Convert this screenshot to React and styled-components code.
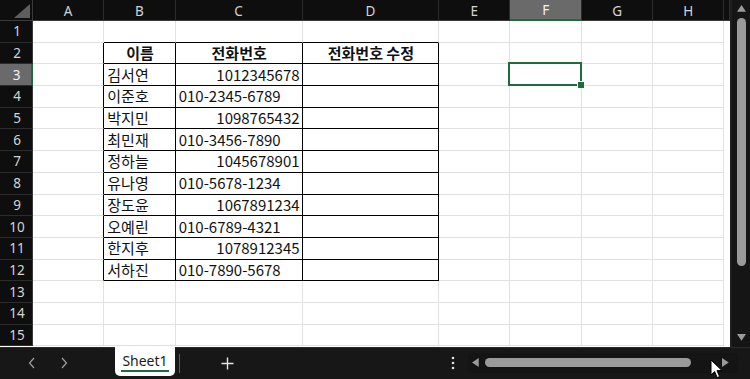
import React from "react";
import styled, { createGlobalStyle, css } from "styled-components";

const Global = createGlobalStyle`
  html, body { margin: 0; padding: 0; background: #171717; overflow: hidden; }
  * { box-sizing: border-box; }
`;

const GREEN = "#1f6b3d";
const GRID = "#e1e1e1";
const HEAD_BG = "#0e0e0e";
const HEAD_LINE = "#2c2c2c";

const colWidths = [71.3, 71.4, 126.9, 136.6, 71.3, 71.7, 71, 71];
const letters = ["A", "B", "C", "D", "E", "F", "G", "H"];

const people = [
  ["김서연", "1012345678", true],
  ["이준호", "010-2345-6789", false],
  ["박지민", "1098765432", true],
  ["최민재", "010-3456-7890", false],
  ["정하늘", "1045678901", true],
  ["유나영", "010-5678-1234", false],
  ["장도윤", "1067891234", true],
  ["오예린", "010-6789-4321", false],
  ["한지후", "1078912345", true],
  ["서하진", "010-7890-5678", false],
];

const Page = styled.div`
  width: 750px;
  height: 379px;
  display: flex;
  flex-direction: column;
  background: #171717;
  position: relative;
  overflow: hidden;
`;

const Main = styled.div`
  display: flex;
  height: 346.5px;
`;

const Sheet = styled.div`
  flex: 1;
  display: grid;
  grid-template-columns: 33px ${colWidths.map((w) => `${w}px`).join(" ")} 1fr;
  grid-template-rows: 21px repeat(15, 21.7px);
  background: #fff;
`;

const Corner = styled.div`
  background: ${HEAD_BG};
  position: relative;
  border-right: 1px solid #3a3a3a;
  border-bottom: 1px solid #3a3a3a;
  svg { position: absolute; right: 2px; bottom: 2px; }
`;

const ColHead = styled.div`
  background: ${(p) => (p.$active ? "#6a6a6a" : HEAD_BG)};
  color: ${(p) => (p.$active ? "#f2f2f2" : "#d4d4d4")};
  border-right: 1px solid ${HEAD_LINE};
  border-bottom: ${(p) => (p.$active ? `2px solid ${GREEN}` : "1px solid #3a3a3a")};
  font: 13.5px "Noto Sans", "Open Sans", sans-serif;
  display: flex;
  align-items: center;
  justify-content: center;
  padding-top: 1px;
`;

const RowHead = styled.div`
  background: ${(p) => (p.$active ? "#6a6a6a" : HEAD_BG)};
  color: ${(p) => (p.$active ? "#f2f2f2" : "#d4d4d4")};
  border-bottom: 1px solid ${HEAD_LINE};
  border-right: ${(p) => (p.$active ? `2px solid ${GREEN}` : "1px solid #3a3a3a")};
  font: 13.5px "Noto Sans", "Open Sans", sans-serif;
  display: flex;
  align-items: center;
  justify-content: center;
  padding-left: 2px;
`;

const Cell = styled.div`
  background: #fff;
  border-right: 1px solid ${(p) => p.$rb};
  border-bottom: 1px solid ${(p) => p.$bb};
  font: ${(p) => (p.$bold ? 700 : 400)} 15px "Noto Sans CJK KR", "Noto Sans", sans-serif;
  color: #111;
  display: flex;
  align-items: center;
  justify-content: ${(p) => p.$align};
  padding: 0 2px 0 3px;
  white-space: nowrap;
  overflow: visible;
  line-height: 20px;
  position: relative;
  ${(p) =>
    p.$selected &&
    css`
      &::after {
        content: "";
        position: absolute;
        inset: -2px -1px -1px -2px;
        border: 2px solid ${GREEN};
      }
      &::before {
        content: "";
        position: absolute;
        right: -4px;
        bottom: -4px;
        width: 6px;
        height: 6px;
        background: ${GREEN};
        border: 1px solid #fff;
        z-index: 2;
      }
    `}
`;

const VScroll = styled.div`
  width: 24px;
  background: #151515;
  border-left: 2px solid #1f1f1f;
  display: flex;
  flex-direction: column;
  align-items: center;
  padding-top: 5px;
`;

const VThumb = styled.div`
  width: 9px;
  height: 248px;
  margin-top: 6px;
  border-radius: 5px;
  background: #9a9a9a;
`;

const Spacer = styled.div`
  flex: 1;
`;

const DownArrow = styled.div`
  margin-bottom: 2px;
`;

const BottomBar = styled.div`
  flex: 1;
  display: flex;
  align-items: stretch;
  background: #171717;
  border-top: 1px solid #2a2a2a;
  padding-right: 12px;
`;

const NavArrows = styled.div`
  width: 115px;
  display: flex;
  align-items: center;
  padding-left: 26px;
  gap: 20px;
  color: #a0a0a0;
`;

const NavBtn = styled.span`
  width: 12px;
  display: flex;
  justify-content: center;
`;

const Tab = styled.div`
  width: 60px;
  margin-top: -1px;
  margin-bottom: 3px;
  background: #fff;
  border-radius: 0 0 5px 5px;
  display: flex;
  flex-direction: column;
  align-items: center;
  justify-content: center;
  font: 14px "Noto Sans", "Open Sans", sans-serif;
  color: #1c1c1c;
`;

const TabLabel = styled.span`
  border-bottom: 2px solid ${GREEN};
  padding: 0 1px 0;
  line-height: 18px;
  margin-top: 1px;
`;

const TabSep = styled.div`
  width: 1px;
  background: #5c5c5c;
  margin: 6px 0 6px 4px;
`;

const AddBtn = styled.div`
  width: 95px;
  display: flex;
  align-items: center;
  justify-content: center;
  color: #e6e6e6;
`;

const MoreBtn = styled.div`
  width: 22px;
  display: flex;
  align-items: center;
  justify-content: center;
  margin-right: 4px;
`;

const HScroll = styled.div`
  width: 270px;
  margin: 5px 0 6px;
  display: flex;
  align-items: center;
  gap: 6px;
  background: #141414;
  border-radius: 4px;
  padding-left: 4px;
`;

const HThumb = styled.div`
  width: 206px;
  height: 9px;
  border-radius: 5px;
  background: #9a9a9a;
`;

const RightArrow = styled.div`
  margin-left: 25px;
  display: flex;
`;

const Cursor = styled.svg`
  position: absolute;
  left: 710px;
  top: 359px;
`;

const Tri = ({ dir, size = 9, color = "#9a9a9a" }) => {
  const s = size;
  const pts = {
    up: `0,${s * 0.75} ${s / 2},0 ${s},${s * 0.75}`,
    down: `0,0 ${s / 2},${s * 0.75} ${s},0`,
    left: `${s * 0.75},0 0,${s / 2} ${s * 0.75},${s}`,
    right: `0,0 ${s * 0.75},${s / 2} 0,${s}`,
  }[dir];
  const horiz = dir === "left" || dir === "right";
  return (
    <svg width={horiz ? s * 0.75 : s} height={horiz ? s : s * 0.75}>
      <polygon points={pts} fill={color} />
    </svg>
  );
};

const inTable = (r, c) => r >= 2 && r <= 12 && c >= 1 && c <= 3;

function cellContent(r, c) {
  if (r === 2) {
    return [null, "이름", "전화번호", "전화번호 수정"][c] ?? "";
  }
  if (r >= 3 && r <= 12) {
    const p = people[r - 3];
    if (c === 1) return p[0];
    if (c === 2) return p[1];
  }
  return "";
}

function alignOf(r, c) {
  if (r === 2) return "center";
  if (r >= 3 && r <= 12 && c === 2 && people[r - 3][2]) return "flex-end";
  return "flex-start";
}

export default function App() {
  const cells = [];
  cells.push(
    <Corner key="corner">
      <svg width="16" height="14">
        <polygon points="16,0 16,14 0,14" fill="#5e5e5e" />
      </svg>
    </Corner>
  );
  letters.forEach((l) =>
    cells.push(
      <ColHead key={"h" + l} $active={l === "F"}>
        {l}
      </ColHead>
    )
  );
  cells.push(<ColHead key="hx" />);

  for (let r = 1; r <= 15; r++) {
    cells.push(
      <RowHead key={"r" + r} $active={r === 3}>
        {r}
      </RowHead>
    );
    for (let c = 0; c < 9; c++) {
      const rb = inTable(r, c) || inTable(r, c + 1) ? "#000" : GRID;
      const bb = inTable(r, c) || inTable(r + 1, c) ? "#000" : GRID;
      cells.push(
        <Cell
          key={r + "-" + c}
          $rb={c === 8 ? "#fff" : rb}
          $bb={c === 8 ? "#fff" : bb}
          $align={alignOf(r, c)}
          $bold={r === 2}
          $selected={r === 3 && c === 5}
        >
          {cellContent(r, c)}
        </Cell>
      );
    }
  }

  return (
    <Page>
      <Global />
      <Main>
        <Sheet>{cells}</Sheet>
        <VScroll>
          <Tri dir="up" />
          <VThumb />
          <Spacer />
          <DownArrow>
            <Tri dir="down" />
          </DownArrow>
        </VScroll>
      </Main>
      <BottomBar>
        <NavArrows>
          <NavBtn>
            <svg width="8" height="12">
              <polyline points="6,1 1.5,6 6,11" fill="none" stroke="#a0a0a0" strokeWidth="1.2" />
            </svg>
          </NavBtn>
          <NavBtn>
            <svg width="8" height="12">
              <polyline points="2,1 6.5,6 2,11" fill="none" stroke="#a0a0a0" strokeWidth="1.2" />
            </svg>
          </NavBtn>
        </NavArrows>
        <Tab>
          <TabLabel>Sheet1</TabLabel>
        </Tab>
        <TabSep />
        <AddBtn>
          <svg width="13" height="13">
            <path d="M6.5 0.5v12M0.5 6.5h12" stroke="#e6e6e6" strokeWidth="1.4" />
          </svg>
        </AddBtn>
        <Spacer />
        <MoreBtn>
          <svg width="4" height="14">
            <circle cx="2" cy="2" r="1.3" fill="#e0e0e0" />
            <circle cx="2" cy="7" r="1.3" fill="#e0e0e0" />
            <circle cx="2" cy="12" r="1.3" fill="#e0e0e0" />
          </svg>
        </MoreBtn>
        <HScroll>
          <Tri dir="left" />
          <HThumb />
          <RightArrow>
            <Tri dir="right" />
          </RightArrow>
        </HScroll>
      </BottomBar>
      <Cursor width="14" height="20" viewBox="0 0 14 20">
        <path
          d="M1 1 L1 16 L4.6 12.6 L7.2 18.6 L9.6 17.6 L7 11.6 L12 11.6 Z"
          fill="#fff"
          stroke="#000"
          strokeWidth="1"
          strokeLinejoin="round"
        />
      </Cursor>
    </Page>
  );
}
